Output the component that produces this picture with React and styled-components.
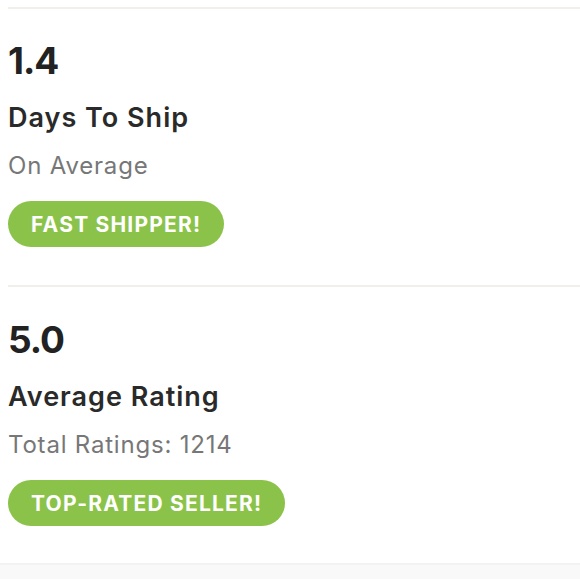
import React from "react"
import styled, { createGlobalStyle } from "styled-components"

const GlobalStyle = createGlobalStyle`
  body {
    margin: 0;
    background: #ffffff;
    font-family: "Inter", "Open Sans", sans-serif;
    -webkit-font-smoothing: antialiased;
  }
`

const Page = styled.div`
  width: 580px;
  min-height: 579px;
  display: flex;
  flex-direction: column;
  background: #ffffff;
`

const Section = styled.section`
  margin-left: 8px;
  padding-top: 7px;
  height: 278px;
  box-sizing: border-box;
`

const Rule = styled.div`
  height: 2px;
  background: #f1efec;
`

const Body = styled.div`
  display: flex;
  flex-direction: column;
  align-items: flex-start;
  padding-top: ${(p) => p.$top}px;
`

const Stat = styled.div`
  font-size: 37px;
  line-height: 44px;
  font-weight: 700;
  color: #222222;
  letter-spacing: -1px;
`

const Label = styled.div`
  margin-top: 19px;
  font-size: 27px;
  line-height: 32px;
  font-weight: 600;
  color: #2a2a2a;
  letter-spacing: 1px;
`

const Sub = styled.div`
  margin-top: 17px;
  font-size: 24px;
  line-height: 30px;
  font-weight: 400;
  color: #777777;
  letter-spacing: 0.8px;
`

const Badge = styled.div`
  margin-top: 20px;
  height: 46px;
  padding: 0 23px;
  display: flex;
  align-items: center;
  border-radius: 23px;
  background: #8bc34a;
  color: #ffffff;
  font-size: 21px;
  font-weight: 700;
  letter-spacing: 1.2px;
`

const Footer = styled.div`
  flex: 1;
  margin-top: 7px;
  background: #f9f9f9;
  border-top: 2px solid #f3f3f3;
`

const stats = [
  { value: "1.4", label: "Days To Ship", sub: "On Average", badge: "FAST SHIPPER!", top: 30 },
  { value: "5.0", label: "Average Rating", sub: "Total Ratings: 1214", badge: "TOP-RATED SELLER!", top: 31 },
]

export default function App() {
  return (
    <Page>
      <GlobalStyle />
      {stats.map((s) => (
        <Section key={s.value}>
          <Rule />
          <Body $top={s.top}>
            <Stat>{s.value}</Stat>
            <Label>{s.label}</Label>
            <Sub>{s.sub}</Sub>
            <Badge>{s.badge}</Badge>
          </Body>
        </Section>
      ))}
      <Footer />
    </Page>
  )
}
